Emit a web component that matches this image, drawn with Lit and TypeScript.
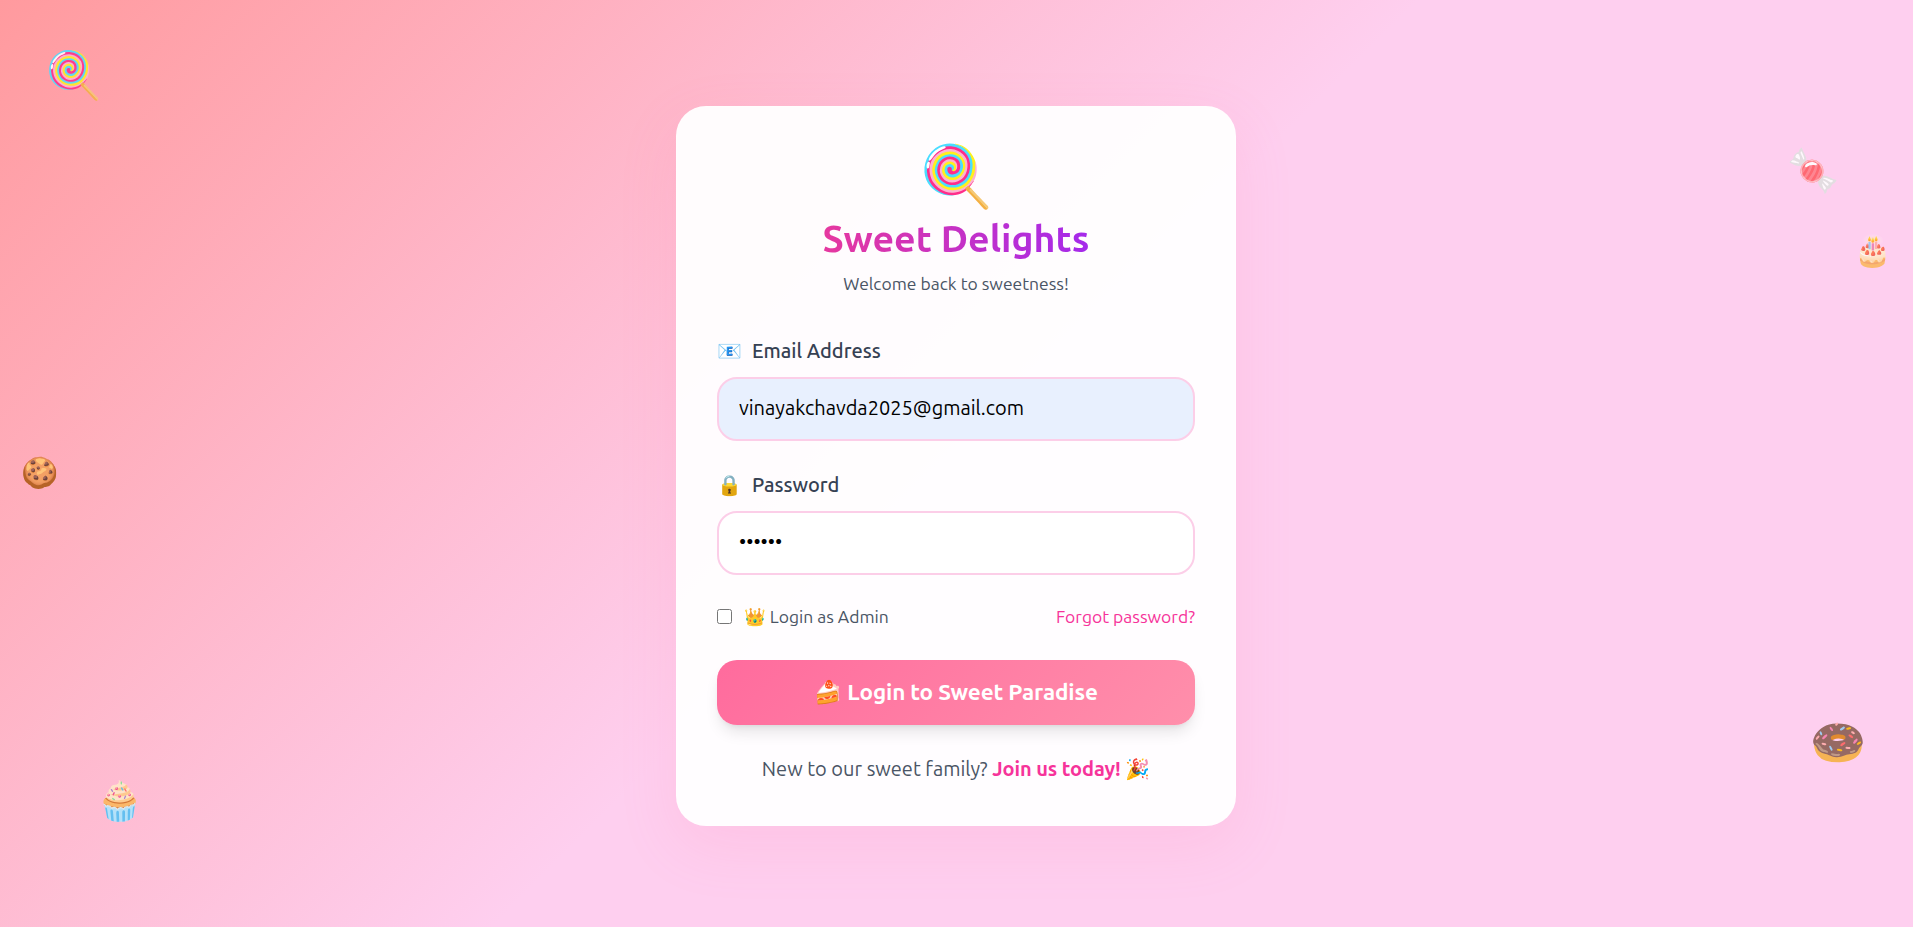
import { LitElement, html, css } from "lit";
import { customElement } from "lit/decorators.js";

const floats = [
  { glyph: "🍭", name: "lollipop" },
  { glyph: "🍬", name: "candy" },
  { glyph: "🎂", name: "cake" },
  { glyph: "🍪", name: "cookie" },
  { glyph: "🧁", name: "cupcake" },
  { glyph: "🍩", name: "donut" },
];

@customElement("app-root")
export class AppRoot extends LitElement {
  static styles = css`
    :host { display: block; }
    * { box-sizing: border-box; }
    .page {
      position: relative; height: 100vh; overflow: hidden; display: flex;
      justify-content: center; align-items: flex-start; padding: 106px 1px 0 0;
      background: linear-gradient(135deg, #ff9a9e 0%, #fecfef 50%, #fecfef 100%);
      font-family: Ubuntu, "Noto Sans", "Noto Color Emoji", sans-serif;
      font-size: 20px; line-height: 30px; color: #4a5565;
    }
    .float { position: absolute; line-height: 1; opacity: 0.87; }
    .lollipop { left: 45px; top: 51px; font-size: 46px; }
    .candy { left: 1787px; top: 149px; font-size: 42px; }
    .cake { left: 1854px; top: 235px; font-size: 30px; }
    .cookie { left: 21px; top: 457px; font-size: 30px; }
    .cupcake { left: 96px; top: 781px; font-size: 38px; }
    .donut { left: 1810px; top: 719px; font-size: 45px; }
    .card {
      width: 560px; height: 720px; padding: 40px; border: 1px solid rgba(255,255,255,.3);
      border-radius: 30px; background: rgba(255,255,255,.95);
      box-shadow: 0 20px 60px rgba(255,107,157,.12);
      display: flex; flex-direction: column;
    }
    .logo { text-align: center; font-size: 60px; line-height: 56px; height: 66px; padding-left: 2px; }
    h1 {
      margin: 0 auto; font-size: 37.5px; line-height: 50px; font-weight: 700; white-space: nowrap;
      background: linear-gradient(90deg, #e6389f, #a52aeb); -webkit-background-clip: text; background-clip: text; color: transparent;
    }
    .sub { text-align: center; font-size: 17.5px; line-height: 25px; margin-top: 8px; }
    .field { margin-top: 29px; }
    .sub + .field { margin-top: 40px; }
    .label { display: flex; gap: 10px; color: #364153; font-weight: 500; }
    input.box {
      display: block; width: 100%; height: 64px; border: 2px solid #fccee8; border-radius: 20px;
      padding: 13px 20px 16px; background: #fff; color: #000; margin-top: 11px; font: inherit; outline: none;
    }
    input.filled { background: #e8f0fe; }
    .options { display: flex; justify-content: space-between; margin-top: 29px; font-size: 17.5px; line-height: 25px; }
    .admin { display: flex; align-items: center; gap: 12px; }
    .check { width: 15px; height: 15px; border: 1px solid #767676; border-radius: 2.5px; background: #fff; }
    a { color: #f6339a; }
    button {
      margin-top: 31px; height: 65px; flex: none; border: 0; border-radius: 20px; color: #fff; padding: 0 0 2px;
      font: 600 22.5px/35px Ubuntu, "Noto Sans", "Noto Color Emoji", sans-serif; letter-spacing: -0.14px;
      background: linear-gradient(135deg, #ff6b9d, #ff8fab);
      box-shadow: 0 10px 15px -3px rgba(0,0,0,.1), 0 4px 6px -4px rgba(0,0,0,.1);
    }
    .footer { text-align: center; margin-top: 29px; }
    .footer a { font-weight: 600; letter-spacing: -0.08px; }
  `;
  render() {
    return html`<main class="page">
      ${floats.map((f) => html`<span class="float ${f.name}">${f.glyph}</span>`)}
      <section class="card">
        <div class="logo">🍭</div>
        <h1>Sweet Delights</h1>
        <div class="sub">Welcome back to sweetness!</div>
        <div class="field">
          <div class="label"><span>📧</span><span>Email Address</span></div>
          <input class="box filled" type="text" .value=${"vinayakchavda2025@gmail.com"} />
        </div>
        <div class="field">
          <div class="label"><span>🔒</span><span>Password</span></div>
          <input class="box" type="password" .value=${"sweets"} />
        </div>
        <div class="options">
          <div class="admin"><span class="check"></span><span>👑 Login as Admin</span></div>
          <a>Forgot password?</a>
        </div>
        <button>🍰 Login to Sweet Paradise</button>
        <div class="footer">New to our sweet family? <a>Join us today!</a> 🎉</div>
      </section>
    </main>`;
  }
}
